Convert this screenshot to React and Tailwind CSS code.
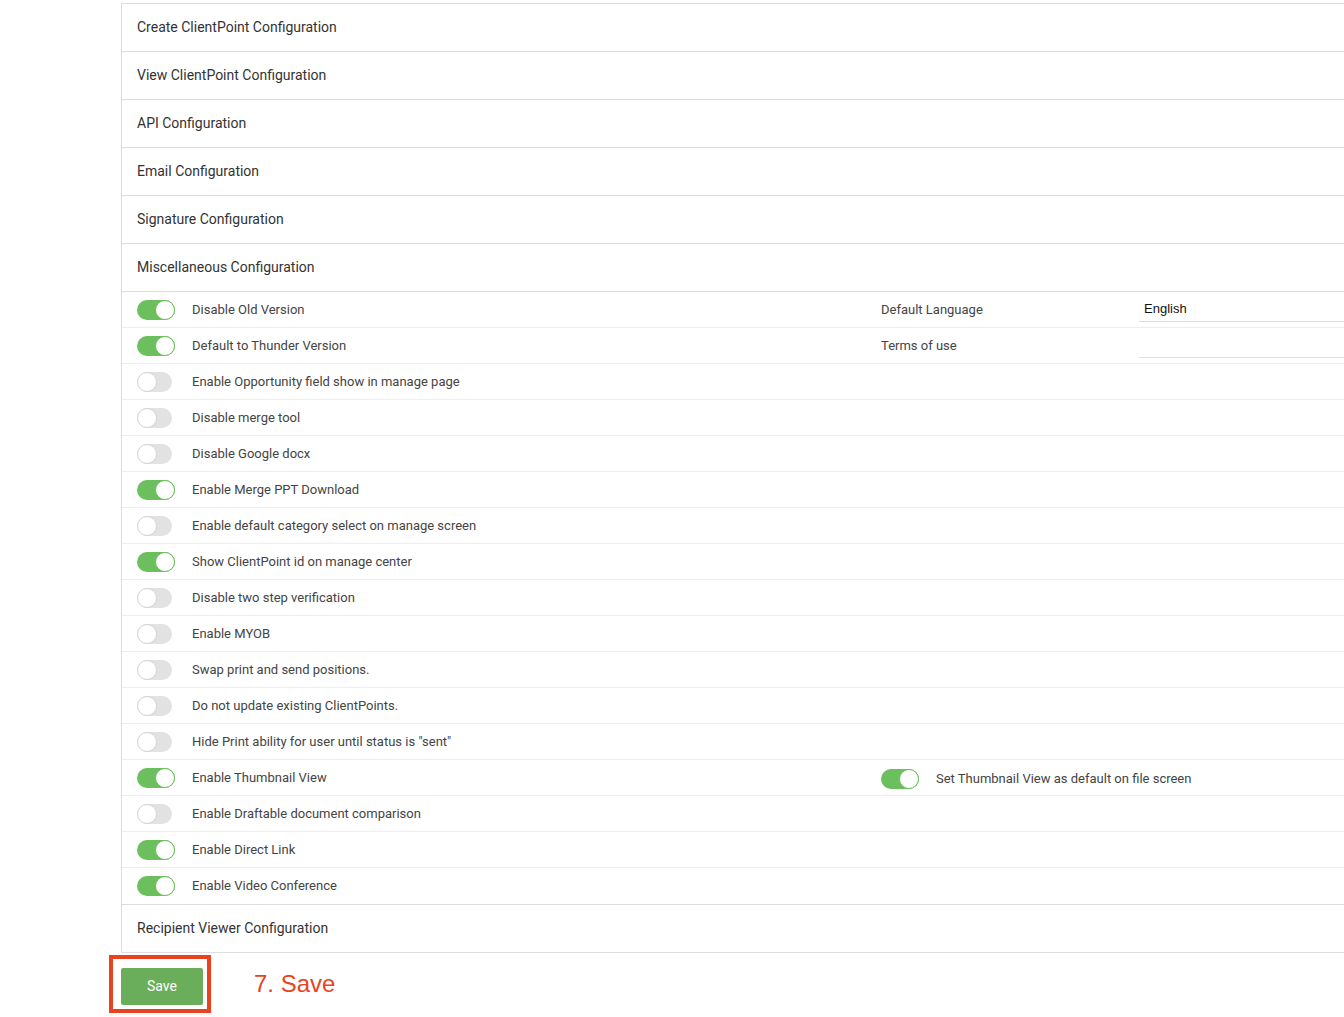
import React from "react";

const headers = [
  "Create ClientPoint Configuration",
  "View ClientPoint Configuration",
  "API Configuration",
  "Email Configuration",
  "Signature Configuration",
  "Miscellaneous Configuration",
];

const rows = [
  { on: true, label: "Disable Old Version", right: "lang" },
  { on: true, label: "Default to Thunder Version", right: "terms" },
  { on: false, label: "Enable Opportunity field show in manage page" },
  { on: false, label: "Disable merge tool" },
  { on: false, label: "Disable Google docx" },
  { on: true, label: "Enable Merge PPT Download" },
  { on: false, label: "Enable default category select on manage screen" },
  { on: true, label: "Show ClientPoint id on manage center" },
  { on: false, label: "Disable two step verification" },
  { on: false, label: "Enable MYOB" },
  { on: false, label: "Swap print and send positions." },
  { on: false, label: "Do not update existing ClientPoints." },
  { on: false, label: 'Hide Print ability for user until status is "sent"' },
  { on: true, label: "Enable Thumbnail View", right: "thumb" },
  { on: false, label: "Enable Draftable document comparison" },
  { on: true, label: "Enable Direct Link" },
  { on: true, label: "Enable Video Conference" },
];

function Toggle({ on }) {
  if (on) {
    return (
      <div className="relative h-[20px] w-[38px] shrink-0 rounded-full bg-[#6cbf5d]">
        <div className="absolute right-0 top-0 h-[20px] w-[20px] rounded-full border border-[#6cbf5d] bg-white" />
      </div>
    );
  }
  return (
    <div className="relative h-[20px] w-[35px] shrink-0 rounded-full bg-[#e2e2e2]">
      <div className="absolute left-0 top-0 h-[20px] w-[20px] rounded-full border border-[#d4d4d4] bg-white" />
    </div>
  );
}

function Right({ kind }) {
  if (kind === "lang") {
    return (
      <div className="flex flex-1 items-center">
        <div className="w-[258px] text-[13px] text-[#444]">Default Language</div>
        <div className="flex h-[24px] flex-1 items-center border-b border-[#ddd] pb-[1px] pl-[5px] text-[13px] text-[#111]" style={{ fontFamily: '"Liberation Sans", Arial, sans-serif' }}>
          English
        </div>
      </div>
    );
  }
  if (kind === "terms") {
    return (
      <div className="flex flex-1 items-center">
        <div className="w-[258px] text-[13px] text-[#444]">Terms of use</div>
        <div className="h-[24px] flex-1 border-b border-[#ddd]" />
      </div>
    );
  }
  if (kind === "thumb") {
    return (
      <div className="flex flex-1 items-center pt-[2px]">
        <Toggle on />
        <span className="ml-[17px] text-[13px] text-[#444]">Set Thumbnail View as default on file screen</span>
      </div>
    );
  }
  return <div className="flex-1" />;
}

export default function App() {
  return (
    <div className="min-h-[1017px] w-[1344px] overflow-hidden bg-white" style={{ fontFamily: "Roboto, 'Noto Sans', sans-serif" }}>
      <div className="ml-[121px] mt-[3px] w-[1240px] border-l border-t border-[#ddd]">
        {headers.map((h) => (
          <div key={h} className="flex h-[48px] items-center border-b border-[#ddd] pl-[15px] text-[14px] text-[#333]">
            {h}
          </div>
        ))}
        {rows.map((r, i) => (
          <div key={i} className={"flex h-[36px] items-center pl-[15px] " + (i < rows.length - 1 ? "border-b border-[#eee]" : "")}>
            <div className="flex w-[744px] items-center">
              <div className="w-[38px]">
                <Toggle on={r.on} />
              </div>
              <span className="ml-[17px] text-[13px] text-[#444]">{r.label}</span>
            </div>
            <Right kind={r.right} />
          </div>
        ))}
        <div className="flex h-[49px] items-center border-b border-t border-[#ddd] pl-[15px] text-[14px] text-[#333]">
          Recipient Viewer Configuration
        </div>
      </div>
      <div className="mt-[2px] flex items-center">
        <div className="ml-[109px] border-[4px] border-[#e8431e] pb-[4px] pl-[8px] pr-[4px] pt-[9px]">
          <div className="flex h-[37px] w-[82px] items-center justify-center rounded-[2px] bg-[#6aae5b] text-[14px] text-white">
            Save
          </div>
        </div>
        <div className="ml-[43px] text-[24px] text-[#e8431e]" style={{ fontFamily: '"Liberation Sans", Arial, sans-serif' }}>
          7. Save
        </div>
      </div>
    </div>
  );
}
